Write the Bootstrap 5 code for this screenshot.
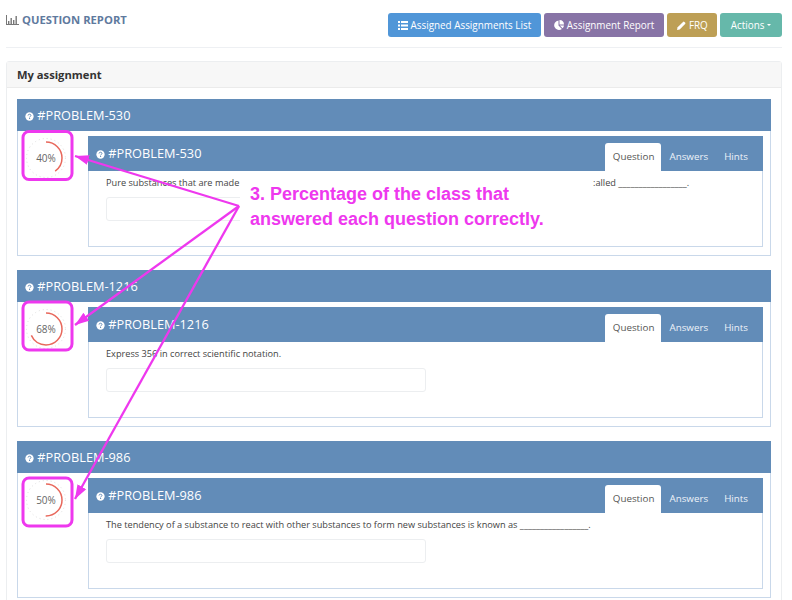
<!DOCTYPE html>
<html lang="en">
<head>
  <meta charset="UTF-8" />
  <title>Question Report</title>
  <link href="https://cdn.jsdelivr.net/npm/bootstrap@5.3.3/dist/css/bootstrap.min.css" rel="stylesheet" />
  <style>
    html, body { margin: 0; padding: 0; height: 600px; overflow: hidden; background: #fff; }
    body { font-family: "Open Sans", "Liberation Sans", sans-serif; color: #444; }
    .page-wrap { position: relative; width: 792px; height: 600px; padding: 13px 10px 0 6px; overflow: hidden; }
    .top-bar { height: 35px; margin-bottom: 13px; border-bottom: 1px solid #eef0f3; }
    .report-title { font-size: 11.25px; font-weight: 700; color: #5f7a9e; line-height: 14px; }
    .report-title svg { vertical-align: -1px; }
    .top-btn { font-size: 9.9px; line-height: 14px; padding: 4px 9px; height: 24px; color: #fff; border: 1px solid transparent; border-radius: 3px; white-space: nowrap; }
    .top-btn svg { vertical-align: -1px; }
    .btn-list { background: #5096d8; }
    .btn-report { background: #8874a6; }
    .btn-frq { background: #bd9f55; padding-right: 8px; }
    .btn-actions { background: #66b8aa; padding: 4px 10px; }
    .outer-panel { border: 1px solid #eceef0; border-radius: 3px; }
    .outer-head { height: 26px; background: #f7f7f7; border-bottom: 1px solid #ebebeb; font-size: 11.2px; font-weight: 700; color: #333; line-height: 25px; padding: 0 10px; }
    .outer-body { padding: 11px 10px 0; }
    .problem-box { height: 157px; margin-bottom: 14px; border: 1px solid #c9d8ea; border-top: 0; background: #fff; }
    .problem-head { height: 32px; background: #628cb8; color: #fff; font-size: 12.75px; line-height: 33px; padding: 0 8px; margin: 0 -1px; }
    .problem-head svg, .inner-head svg { vertical-align: -1px; }
    .gauge-cell { width: 70px; flex: none; padding: 5px 0 0 6px; }
    .gauge-cell svg { display: block; }
    .gauge-text { font-size: 10px; fill: #666; text-anchor: middle; font-family: "Open Sans", sans-serif; }
    .inner-panel { width: 675px; height: 111px; margin-top: 5px; border: 1px solid #c9d8ea; border-top: 0; }
    .inner-head { height: 35px; background: #628cb8; color: #fff; font-size: 12.75px; margin: 0 -1px; padding: 0 7px 0 8px; }
    .inner-title { padding-top: 1px; }
    .inner-head .nav-link { font-size: 9.8px; line-height: 14px; color: #eef3f8; padding: 7px 8px; border: 0; border-radius: 3px 3px 0 0; }
    .inner-head .nav-link.active { background: #fff; color: #555; padding: 7px 7px 7px 8px; }
    .question-body { padding: 5px 17px; font-size: 9.2px; line-height: 14px; color: #444; }
    .cut-left { display: inline-block; width: 487px; }
    .answer-box { width: 320px; height: 24px; margin-top: 7px; padding: 0; min-height: 0; border: 1px solid #eceef0; border-radius: 3px; }
    .note-cover { position: absolute; left: 240px; top: 176px; width: 350px; height: 60px; background: #fff; padding: 6px 0 0 10px; font-family: "Liberation Sans", sans-serif; font-weight: 700; font-size: 18px; line-height: 25px; color: #ee38ee; }
    .note-lines { position: absolute; left: 0; top: 0; }
  </style>
</head>
<body>
  <svg width="0" height="0" class="d-block">
    <symbol id="ico-help" viewBox="0 0 10 10">
      <circle cx="5" cy="5" r="4.6" fill="#fff"/>
      <path d="M3.4 3.9C3.500 2.900 4.200 2.500 5 2.500c.9 0 1.600.5 1.600 1.300 0 1.200-1.500 1.200-1.500 2.200" fill="none" stroke="#628cb8" stroke-width="1.100"/>
      <rect x="4.500" y="6.600" width="1.200" height="1.200" fill="#628cb8"/>
    </symbol>
  </svg>

  <div class="page-wrap">
    <div class="top-bar d-flex justify-content-between align-items-start">
      <div class="report-title">
        <svg width="13" height="10" viewBox="0 0 13 10" fill="#777"><path d="M0 0h1v9h12v1H0z"/><rect x="2" y="6" width="1.400" height="3"/><rect x="4.500" y="3" width="1.400" height="6"/><rect x="7" y="5" width="1.400" height="4"/><rect x="9.500" y="1" width="1.400" height="8"/></svg>
        QUESTION REPORT
      </div>
      <div class="d-flex" style="gap:3px">
        <button class="btn top-btn btn-list">
          <svg width="10" height="9" viewBox="0 0 10 9" fill="#fff"><path d="M0 0h2v2H0zM3 0h7v2H3zM0 3.500h2v2H0zM3 3.500h7v2H3zM0 7h2v2H0zM3 7h7v2H3z"/></svg>
          Assigned Assignments List</button>
        <button class="btn top-btn btn-report">
          <svg width="10" height="10" viewBox="0 0 10 10" fill="#fff"><path d="M4.500.6v4.900l3.400 3.400A4.700 4.700 0 1 1 4.500.6zM5.500 0a4.700 4.700 0 0 1 4.500 4.500H5.500zM5.800 5.500H10a4.700 4.700 0 0 1-1.400 2.800z"/></svg>
          Assignment Report</button>
        <button class="btn top-btn btn-frq">
          <svg width="9" height="9" viewBox="0 0 9 9" fill="#fff"><path d="M0 9l.6-2.700L6 .9a1 1 0 0 1 1.400 0l.7.7a1 1 0 0 1 0 1.400L2.700 8.400z"/></svg>
          FRQ</button>
        <button class="btn top-btn btn-actions dropdown-toggle">Actions</button>
      </div>
    </div>

    <div class="outer-panel">
      <div class="outer-head">My assignment</div>
      <div class="outer-body" id="problem-list"></div>
    </div>

    <div class="note-cover">3. Percentage of the class that<br>answered each question correctly.</div>

    <svg class="note-lines" width="792" height="600" fill="none" stroke="#ee38ee">
      <defs>
        <marker id="arrow-tip" markerUnits="userSpaceOnUse" markerWidth="16" markerHeight="12" refX="14" refY="6" orient="auto">
          <path d="M0 1L14 6L0 11z" fill="#ee38ee" stroke="none"/>
        </marker>
      </defs>
      <rect x="23" y="131.500" width="49" height="48" rx="6" stroke-width="3"/>
      <rect x="23" y="302" width="49" height="48" rx="6" stroke-width="3"/>
      <rect x="23" y="478" width="49" height="48" rx="6" stroke-width="3"/>
      <path d="M239 206L75 156" stroke-width="2.300" marker-end="url(#arrow-tip)"/>
      <path d="M239 206L75 325" stroke-width="2.300" marker-end="url(#arrow-tip)"/>
      <path d="M239 206L75 499" stroke-width="2.300" marker-end="url(#arrow-tip)"/>
    </svg>
  </div>

  <script src="https://cdn.jsdelivr.net/npm/bootstrap@5.3.3/dist/js/bootstrap.bundle.min.js"></script>
  <script>
    const blank = "_".repeat(17);
    const problems = [
      { id: 530, pct: 40, text: `<span class="cut-left">Pure substances that are made</span>:alled ${blank}.` },
      { id: 1216, pct: 68, text: "Express 356 in correct scientific notation." },
      { id: 986, pct: 50, text: `The tendency of a substance to react with other substances to form new substances is known as ${blank}.` }
    ];

    const help = '<svg width="9" height="9"><use href="#ico-help"/></svg>';
    const circum = 2 * Math.PI * 16;

    document.getElementById("problem-list").innerHTML = problems.map(p => `
      <div class="problem-box">
        <div class="problem-head">${help} #PROBLEM-${p.id}</div>
        <div class="d-flex">
          <div class="gauge-cell">
            <svg width="44" height="44" viewBox="0 0 44 44">
              <circle cx="22" cy="22" r="19.500" fill="none" stroke="#dedede" stroke-width="1" stroke-dasharray="1 3"/>
              <circle cx="22" cy="22" r="16" fill="none" stroke="#e8685c" stroke-width="1.500"
                stroke-dasharray="${circum * p.pct / 100} ${circum}" transform="rotate(-90 22 22)"/>
              <text class="gauge-text" x="22" y="25.500">${p.pct}%</text>
            </svg>
          </div>
          <div class="inner-panel">
            <div class="inner-head d-flex justify-content-between align-items-end">
              <div class="align-self-center inner-title">${help} #PROBLEM-${p.id}</div>
              <ul class="nav">
                <li class="nav-item"><a class="nav-link active" href="#">Question</a></li>
                <li class="nav-item"><a class="nav-link" href="#">Answers</a></li>
                <li class="nav-item"><a class="nav-link" href="#">Hints</a></li>
              </ul>
            </div>
            <div class="question-body">
              <div>${p.text}</div>
              <input class="form-control answer-box" type="text" />
            </div>
          </div>
        </div>
      </div>`).join("");
  </script>
</body>
</html>
